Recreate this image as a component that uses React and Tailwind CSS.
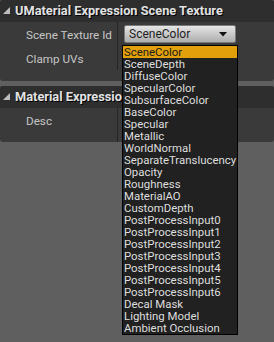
const sceneTextures = [
  "SceneColor",
  "SceneDepth",
  "DiffuseColor",
  "SpecularColor",
  "SubsurfaceColor",
  "BaseColor",
  "Specular",
  "Metallic",
  "WorldNormal",
  "SeparateTranslucency",
  "Opacity",
  "Roughness",
  "MaterialAO",
  "CustomDepth",
  "PostProcessInput0",
  "PostProcessInput1",
  "PostProcessInput2",
  "PostProcessInput3",
  "PostProcessInput4",
  "PostProcessInput5",
  "PostProcessInput6",
  "Decal Mask",
  "Lighting Model",
  "Ambient Occlusion",
]

const ExpandArrow = () => (
  <svg width="8" height="8" viewBox="0 0 8 8" className="shrink-0">
    <polygon points="7,0 7,7 0,7" fill="#bdbdbd" />
  </svg>
)

const CategoryHeader = ({ title }) => (
  <div className="h-[22px] flex items-center bg-[#2e2e2e] rounded-t-[2px]">
    <div className="pl-[3px] pr-[4px]">
      <ExpandArrow />
    </div>
    <span className="text-[12.8px] font-bold text-[#e2e2e2] whitespace-nowrap [text-shadow:1px_1px_0_#000]">
      {title}
    </span>
  </div>
)

const Row = ({ label, height = "h-[24px]", children }) => (
  <div className={`flex ${height}`}>
    <div className="w-[117px] shrink-0 flex items-start pt-[5px] pl-[26px] text-[11.7px] text-[#c6c6c6]">{label}</div>
    <div className="w-px bg-[#262626]" />
    <div className="flex-1 relative">{children}</div>
  </div>
)

export default function App() {
  return (
    <div
      className="w-[274px] h-[342px] bg-[#5f5f5f] overflow-hidden relative"
      style={{ fontFamily: "Roboto, 'Noto Sans', sans-serif" }}
    >
      <CategoryHeader title="UMaterial Expression Scene Texture" />
      <div className="bg-[#3a3a3a] rounded-b-[3px] pb-[11px]">
        <Row label="Scene Texture Id">
          <div className="ml-[6px] mt-[3px] w-[112px] h-[18px] rounded-[2px] border border-[#7a7a7a] bg-gradient-to-b from-[#e6e6e6] to-[#adadad] flex items-center justify-between pl-[4px] pr-[8px]">
            <span className="text-[12px] text-[#1e1e1e] leading-none">SceneColor</span>
            <svg width="8" height="5" viewBox="0 0 8 5">
              <polygon points="0,0 8,0 4,4.5" fill="#111" />
            </svg>
          </div>
        </Row>
        <Row label="Clamp UVs" />
      </div>

      <div className="h-[5px]" />

      <CategoryHeader title="Material Expression" />
      <div className="bg-[#3a3a3a] rounded-b-[3px]">
        <Row label="Desc" height="h-[34px]" />
      </div>

      <ul className="absolute left-[122px] top-[45px] w-[116px] border border-black bg-[#212121]">
        {sceneTextures.map((name, i) => (
          <li
            key={name}
            className={`h-[12px] leading-[12px] pl-[1px] text-[11.4px] whitespace-nowrap overflow-hidden ${
              i === 0 ? "bg-[#e2a00a] text-[#1a1a1a]" : "text-[#dedede]"
            }`}
          >
            {name}
          </li>
        ))}
      </ul>
    </div>
  )
}
